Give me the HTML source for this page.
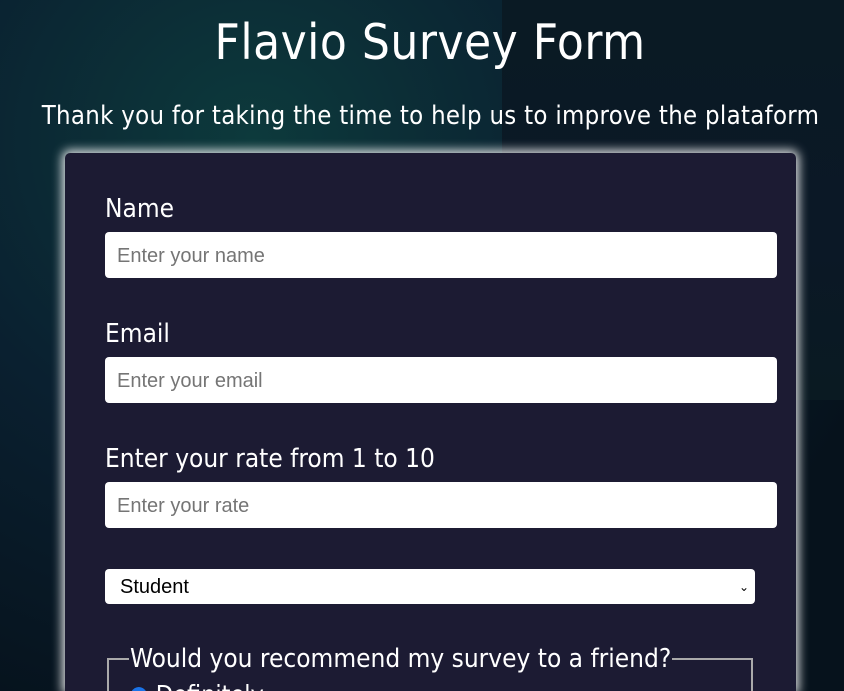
<!DOCTYPE html>
<html><head><meta charset="utf-8"><style>
html,body{margin:0;width:844px;height:691px;overflow:hidden}
body{font-family:"DejaVu Sans Condensed","DejaVu Sans",sans-serif;font-stretch:condensed;color:#fff;
background:radial-gradient(ellipse at 30% 20%,#0d3a3c 0%,#0a2030 40%,#06121c 80%),#071420;position:relative}
.bgr{position:absolute;left:502px;top:0;width:342px;height:400px;background:linear-gradient(180deg,#0a1a24,#0b1826 60%,#0a1a22)}
h1{position:absolute;top:14px;left:0;width:860px;text-align:center;margin:0;font-size:49px;font-weight:normal;letter-spacing:.5px}
p.sub{position:absolute;top:101px;left:0;width:861px;text-align:center;margin:0;font-size:25.5px;letter-spacing:.3px}
.card{position:absolute;left:65px;top:153px;width:731px;height:538px;background:#1c1b33;border-radius:5px 5px 0 0;box-shadow:0 0 10px 3px rgba(255,255,255,.85);overflow:hidden}
label{position:absolute;left:40px;font-size:26px}
.in{position:absolute;left:40px;width:672px;height:46px;background:#fff;border-radius:4px;color:#757575;font-family:"Liberation Sans",sans-serif;font-size:20px;line-height:48px;text-indent:12px}
.sel{position:absolute;left:40px;top:416px;width:650px;height:35px;background:#fff;border-radius:4px;color:#000;font-family:"Liberation Sans",sans-serif;font-size:20px;line-height:37px;text-indent:15px}
.sel span{position:absolute;right:6px;top:0;font-size:12px;text-indent:0}
fieldset{position:absolute;left:42px;top:491px;width:646px;height:200px;border:2px solid #aaa;margin:0;padding:0 20px;box-sizing:border-box}
legend{font-size:26px;padding:0 1px;margin-left:0}
</style></head><body>
<div class="bgr"></div>
<h1>Flavio Survey Form</h1>
<p class="sub">Thank you for taking the time to help us to improve the plataform</p>
<div class="card">
<label style="top:41px">Name</label>
<div class="in" style="top:79px">Enter your name</div>
<label style="top:166px">Email</label>
<div class="in" style="top:204px">Enter your email</div>
<label style="top:291px">Enter your rate from 1 to 10</label>
<div class="in" style="top:329px">Enter your rate</div>
<div class="sel">Student<span>&#8964;</span></div>
<fieldset><legend>Would you recommend my survey to a friend?</legend><div style="font-size:25px;margin-top:6px"><span style="color:#1a73e8">●</span> Definitely</div></fieldset>
</div>
</body></html>
